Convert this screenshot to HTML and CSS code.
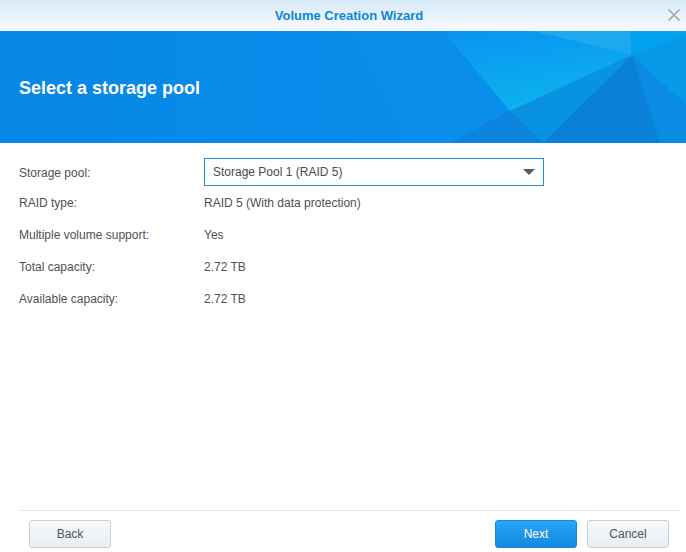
FILE: index.html
```html
<!DOCTYPE html>
<html lang="en">
<head>
<meta charset="utf-8">
<title>Volume Creation Wizard</title>
<link rel="stylesheet" href="styles.css">
</head>
<body>
<div class="window">
  <div class="titlebar">
    <span class="title">Volume Creation Wizard</span>
    <span class="close" aria-label="Close">
      <svg width="14" height="14" viewBox="0 0 14 14"><path d="M1.5 1.5 L12.5 12.5 M12.5 1.5 L1.5 12.5" stroke="#9ea5ab" stroke-width="1.6" fill="none"/></svg>
    </span>
  </div>
  <div class="banner">
    <svg class="banner-art" viewBox="0 0 686 112" preserveAspectRatio="none">
      <defs>
        <linearGradient id="g1" x1="0" y1="0" x2="1" y2="0">
          <stop offset="0" stop-color="#0787e6"/>
          <stop offset="1" stop-color="#0890ee"/>
        </linearGradient>
        <linearGradient id="g2" x1="0" y1="0" x2="0.3" y2="1">
          <stop offset="0" stop-color="#0994f1"/>
          <stop offset="1" stop-color="#0cb2ee"/>
        </linearGradient>
      </defs>
      <rect x="0" y="0" width="686" height="112" fill="url(#g1)"/>
      <polygon points="352,0 443,0 510,80 450,112 407,112" fill="#098eeb"/>
      <polygon points="443,0 533,0 632,24 510,80" fill="url(#g2)"/>
      <polygon points="533,0 630,0 632,24" fill="#1ea8ee"/>
      <polygon points="630,0 686,0 686,4 632,24" fill="#03a2f1"/>
      <polygon points="686,4 686,74 632,24" fill="#0898e6"/>
      <polygon points="632,24 686,74 686,112 660,112" fill="#0a8ce2"/>
      <polygon points="632,24 660,112 543,112" fill="#0a80d8"/>
      <polygon points="510,80 632,24 543,112" fill="#0a92e2"/>
      <polygon points="450,112 510,80 543,112" fill="#0a84dc"/>
    </svg>
    <h1 class="banner-title">Select a storage pool</h1>
  </div>
  <div class="content">
    <div class="form">
      <div class="label">Storage pool:</div>
      <div class="value">
        <div class="select">
          <span>Storage Pool 1 (RAID 5)</span>
          <span class="arrow"></span>
        </div>
      </div>
      <div class="label">RAID type:</div>
      <div class="value">RAID 5 (With data protection)</div>
      <div class="label">Multiple volume support:</div>
      <div class="value">Yes</div>
      <div class="label">Total capacity:</div>
      <div class="value">2.72 TB</div>
      <div class="label">Available capacity:</div>
      <div class="value">2.72 TB</div>
    </div>
  </div>
  <div class="footer">
    <button class="btn">Back</button>
    <div class="spacer"></div>
    <button class="btn btn-primary">Next</button>
    <button class="btn">Cancel</button>
  </div>
</div>
</body>
</html>
```

FILE: styles.css
```css
html, body {
  margin: 0;
  padding: 0;
  background: #ffffff;
}

.window {
  width: 686px;
  height: 552px;
  display: flex;
  flex-direction: column;
  font-family: "Liberation Sans", Arial, sans-serif;
  font-size: 12px;
  color: #505050;
  overflow: hidden;
}

.titlebar {
  height: 31px;
  flex: none;
  position: relative;
  display: flex;
  align-items: center;
  justify-content: center;
  padding-left: 12px;
  background: linear-gradient(#d8eaf8, #f8fbfe);
}

.title {
  font-size: 13px;
  font-weight: bold;
  color: #0b86dc;
}

.close {
  position: absolute;
  right: 5px;
  top: 8px;
  width: 14px;
  height: 14px;
  display: block;
}

.close svg {
  display: block;
}

.banner {
  height: 112px;
  flex: none;
  position: relative;
  display: flex;
  align-items: center;
  padding-left: 19px;
  background: #0788e6;
  overflow: hidden;
}

.banner-art {
  position: absolute;
  left: 0;
  top: 0;
  width: 100%;
  height: 100%;
}

.banner-title {
  position: relative;
  margin: 2px 0 0 0;
  font-size: 18px;
  font-weight: bold;
  color: #ffffff;
}

.content {
  flex: 1;
  padding: 15px 19px 0 19px;
}

.form {
  display: grid;
  grid-template-columns: 185px 340px;
  grid-template-rows: 29px repeat(4, 32px);
  align-items: center;
}

.label, .value {
  color: #505050;
}

.form > .value:nth-child(2) {
  align-self: start;
}

.select {
  height: 28px;
  box-sizing: border-box;
  border: 1px solid #1e8ee2;
  display: flex;
  align-items: center;
  justify-content: space-between;
  padding: 0 8px;
  color: #4a4a4a;
}

.arrow {
  width: 0;
  height: 0;
  border-left: 6px solid transparent;
  border-right: 6px solid transparent;
  border-top: 6px solid #555b61;
}

.footer {
  flex: none;
  height: 42px;
  margin: 0 6px 0 19px;
  border-top: 1px solid #e2e6ea;
  padding: 9px 11px 0 10px;
  box-sizing: border-box;
  display: flex;
  align-items: flex-start;
  gap: 10px;
}

.spacer {
  flex: 1;
}

.btn {
  width: 82px;
  height: 28px;
  border: 1px solid #c6d0da;
  border-radius: 3px;
  background: linear-gradient(#f7f9fb, #e9eef3);
  font-family: "Liberation Sans", Arial, sans-serif;
  font-size: 12px;
  color: #4a5560;
  padding: 0;
}

.btn-primary {
  border-color: #1a84d6;
  background: linear-gradient(#2aa4f4, #138ae2);
  color: #ffffff;
}
```
